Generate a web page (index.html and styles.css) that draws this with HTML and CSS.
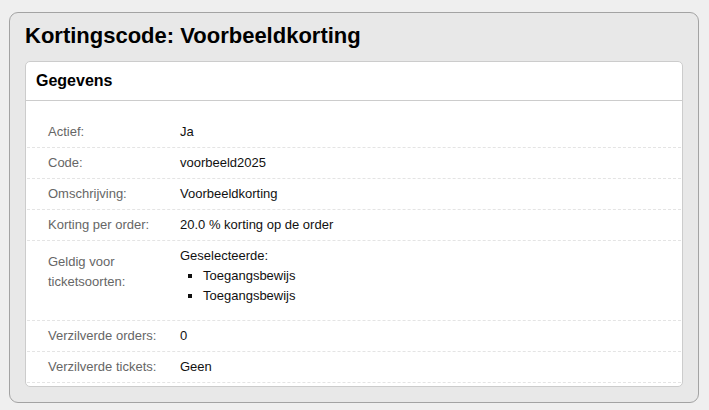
FILE: index.html
```html
<!DOCTYPE html>
<html lang="nl">
<head>
<meta charset="utf-8">
<title>Kortingscode: Voorbeeldkorting</title>
<link rel="stylesheet" href="styles.css">
</head>
<body>
<div class="box">
  <h1 class="title">Kortingscode: Voorbeeldkorting</h1>
  <div class="card">
    <div class="card-header">Gegevens</div>
    <div class="card-body">
      <div class="row"><div class="label">Actief:</div><div class="value">Ja</div></div>
      <div class="row"><div class="label">Code:</div><div class="value">voorbeeld2025</div></div>
      <div class="row"><div class="label">Omschrijving:</div><div class="value">Voorbeeldkorting</div></div>
      <div class="row"><div class="label">Korting per order:</div><div class="value">20.0 % korting op de order</div></div>
      <div class="row"><div class="label label-low">Geldig voor<br>ticketsoorten:</div><div class="value">Geselecteerde:
        <ul class="list"><li>Toegangsbewijs</li><li>Toegangsbewijs</li></ul></div></div>
      <div class="row"><div class="label">Verzilverde orders:</div><div class="value">0</div></div>
      <div class="row"><div class="label">Verzilverde tickets:</div><div class="value">Geen</div></div>
    </div>
  </div>
</div>
</body>
</html>
```
FILE: styles.css
```css
html { background: #efefef; }
body {
  margin: 12px 10px 8px 9px;
  font-family: "Liberation Sans", Arial, sans-serif;
  font-size: 13px;
  line-height: 20px;
  color: #111;
}
.box {
  background: #e8e8e8;
  border: 1px solid #a3a3a3;
  border-radius: 9px;
  padding: 10px 15px 15px;
}
.title {
  margin: 0 0 13px;
  font-size: 22px;
  line-height: 25px;
  font-weight: bold;
  color: #000;
}
.card {
  background: #fff;
  border: 1px solid #cccccc;
  border-radius: 5px;
}
.card-header {
  padding: 10px 10px 10px;
  font-size: 16px;
  line-height: 18px;
  font-weight: bold;
  color: #000;
  border-bottom: 1px solid #cccccc;
}
.card-body {
  padding: 16px 1px 3px;
}
.row {
  display: grid;
  grid-template-columns: 153px 1fr;
  padding: 5px 0;
  border-bottom: 1px dashed #e4e4e4;
}
.label {
  padding-left: 21px;
  color: #666;
}
.label-low { padding-top: 6px; }
.value { color: #111; }
.list {
  margin: 0 0 9px;
  padding-left: 23px;
  list-style: square;
}
```
